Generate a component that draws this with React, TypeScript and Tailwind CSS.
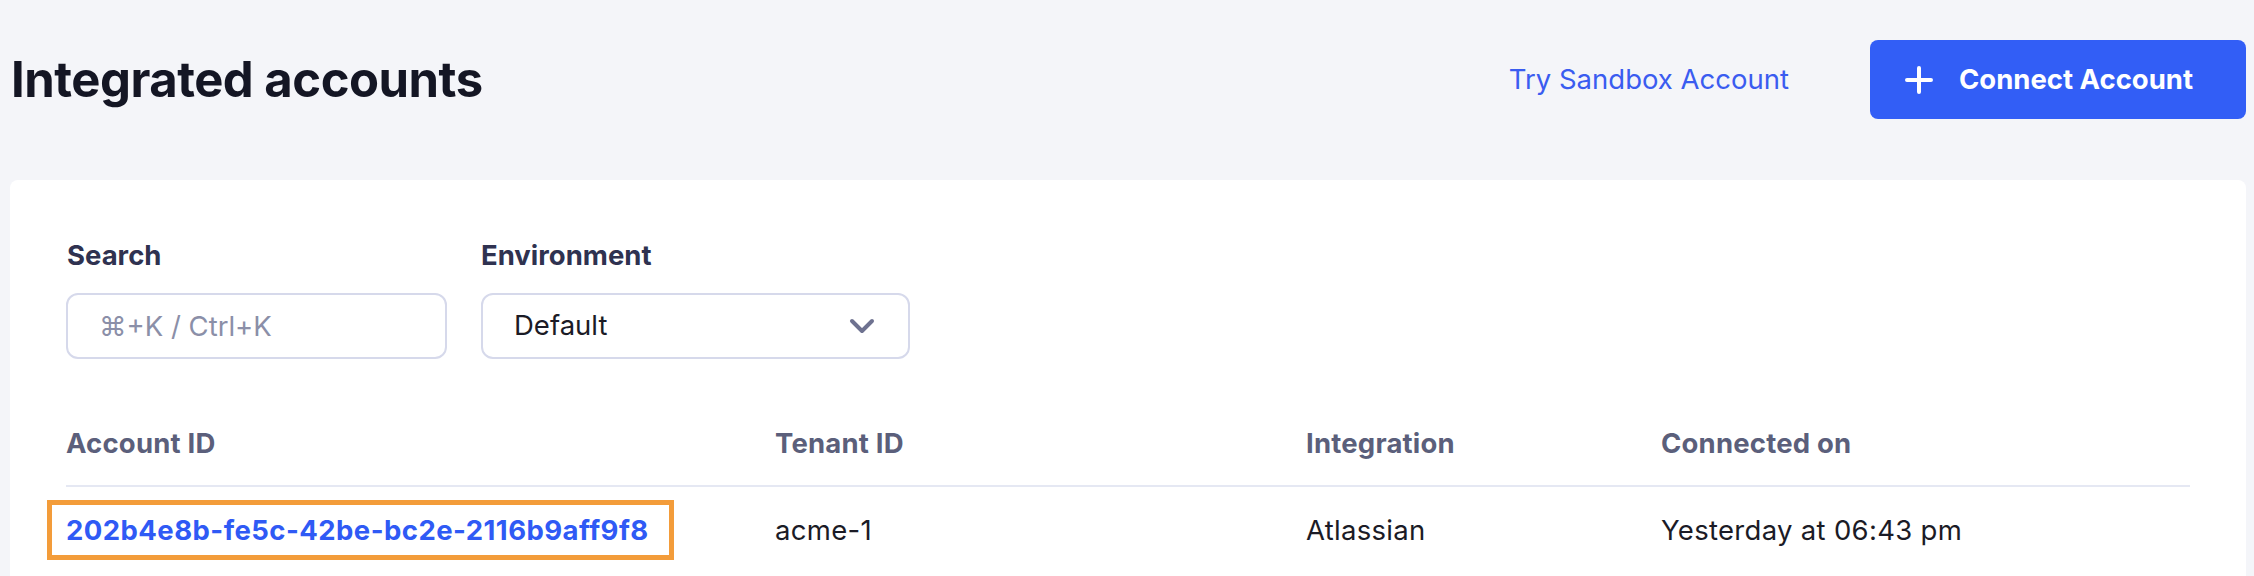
const columns = ['Account ID', 'Tenant ID', 'Integration', 'Connected on'];

const accounts = [
    {
        id: '202b4e8b-fe5c-42be-bc2e-2116b9aff9f8',
        tenant: 'acme-1',
        integration: 'Atlassian',
        connectedOn: 'Yesterday at 06:43 pm',
    },
];

function PlusIcon() {
    return (
        <svg width="30" height="30" viewBox="0 0 30 30" fill="none">
            <path d="M15 3 V27 M3 15 H27" stroke="white" strokeWidth="4" strokeLinecap="round" />
        </svg>
    );
}

function ChevronDown() {
    return (
        <svg width="26" height="16" viewBox="0 0 26 16" fill="none">
            <path d="M3 3 L13 13 L23 3" stroke="#6e7290" strokeWidth="4" strokeLinecap="round" strokeLinejoin="round" />
        </svg>
    );
}

export default function App() {
    return (
        <div className="min-h-screen bg-[#f4f5f9] pl-[10px] pr-[8px] pt-[40px] font-['Inter',sans-serif]">
            {/* Header */}
            <div className="flex items-center justify-between h-[79px]">
                <h1 className="pl-px text-[49px] leading-none font-bold text-[#141624] tracking-[-0.01em]">
                    Integrated accounts
                </h1>
                <div className="flex items-center">
                    <a className="mr-[81px] text-[27.5px] text-[#3a5cf0] cursor-pointer">Try Sandbox Account</a>
                    <button className="flex items-center gap-[25px] h-[79px] w-[376px] pl-[34px] rounded-lg bg-[#325ef6] text-white text-[27.5px] font-bold">
                        <PlusIcon />
                        Connect Account
                    </button>
                </div>
            </div>

            {/* Card */}
            <div className="mt-[61px] bg-white rounded-lg px-[56px] pt-[59px] pb-10">
                {/* Filters */}
                <div className="flex gap-[34px]">
                    <div className="flex flex-col">
                        <label className="text-[27.5px] leading-[33px] font-bold text-[#2f3250] mb-[21px] pl-px">Search</label>
                        <input
                            placeholder="⌘+K / Ctrl+K"
                            className="w-[381px] h-[66px] border-2 border-[#d6d9eb] rounded-xl px-[31px] text-[27.5px] text-[#1b1b26] placeholder:text-[#8b8fa8] outline-none"
                        />
                    </div>
                    <div className="flex flex-col">
                        <label className="text-[27.5px] leading-[33px] font-bold text-[#2f3250] mb-[21px]">Environment</label>
                        <div className="flex items-center justify-between w-[429px] h-[66px] border-2 border-[#d6d9eb] rounded-xl pl-[31px] pr-[33px] text-[27.5px] text-[#1b1b26]">
                            <span>Default</span>
                            <ChevronDown />
                        </div>
                    </div>
                </div>

                {/* Table */}
                <div className="mt-[42px]">
                    <div className="grid grid-cols-[709px_531px_355px_1fr] items-center h-[86px] border-b-2 border-[#e5e8f3] text-[27.5px] leading-[33px] font-bold text-[#5b5f7b] tracking-[0.2px]">
                        {columns.map((col) => (
                            <div key={col}>{col}</div>
                        ))}
                    </div>
                    {accounts.map((acc) => (
                        <div
                            key={acc.id}
                            className="grid grid-cols-[709px_531px_355px_1fr] items-center h-[86px] text-[27.5px] leading-[33px] text-[#1b1b26] tracking-[0.3px]"
                        >
                            <div>
                                <span className="relative inline-block font-bold text-[#2f5af5] tracking-[0.45px] cursor-pointer">
                                    {acc.id}
                                    <span className="absolute -left-[19px] -right-[25px] -top-[14px] -bottom-[13px] border-[5px] border-[#f39c3a]" />
                                </span>
                            </div>
                            <div>{acc.tenant}</div>
                            <div>{acc.integration}</div>
                            <div>{acc.connectedOn}</div>
                        </div>
                    ))}
                </div>
            </div>
        </div>
    );
}
